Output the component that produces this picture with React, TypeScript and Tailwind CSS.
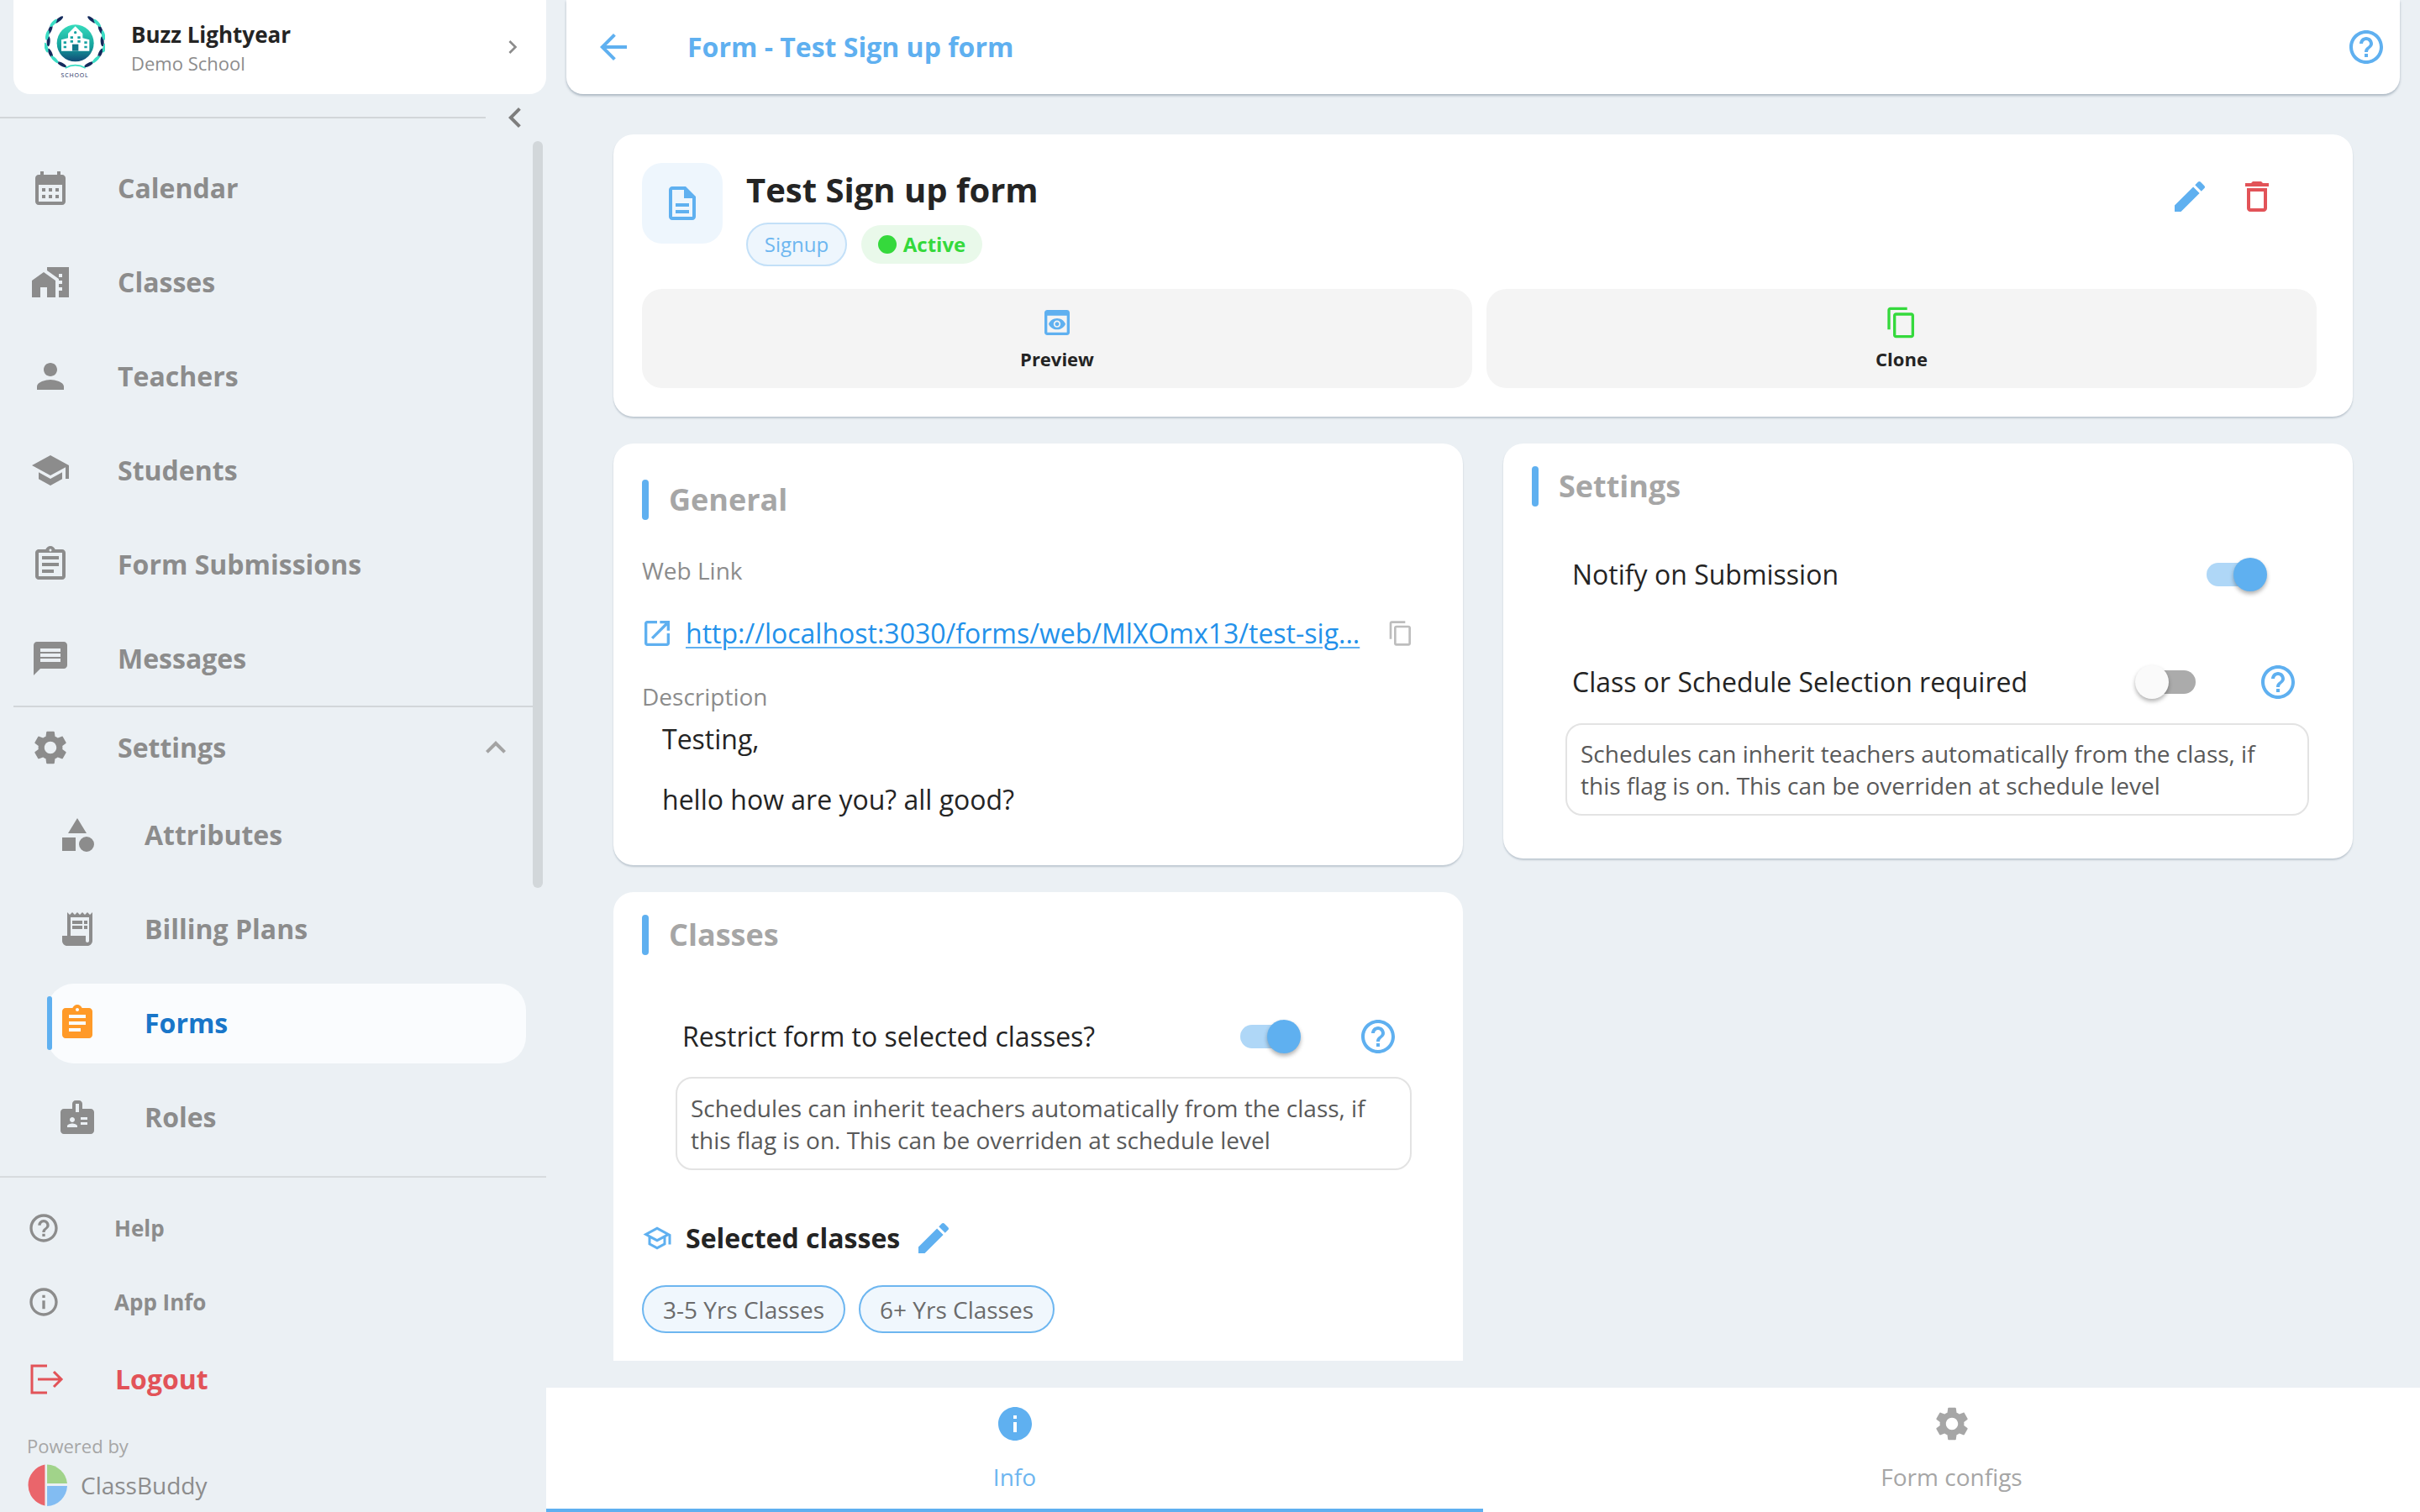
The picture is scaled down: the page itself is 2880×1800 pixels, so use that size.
import React from "react";

const P = {
  calendar: "M19 4h-1V2h-2v2H8V2H6v2H5c-1.1 0-2 .9-2 2v14c0 1.1.9 2 2 2h14c1.1 0 2-.9 2-2V6c0-1.1-.9-2-2-2zm0 16H5V10h14v10zM9 14H7v-2h2v2zm4 0h-2v-2h2v2zm4 0h-2v-2h2v2zm-8 4H7v-2h2v2zm4 0h-2v-2h2v2zm4 0h-2v-2h2v2z",
  classes: "M1 11v10h5v-6h4v6h5V11L8 6zM10 3v1.97l7 5V11h2v2h-2v2h2v2h-2v4h6V3H10zm9 6h-2V7h2v2z",
  person: "M12 12c2.21 0 4-1.79 4-4s-1.79-4-4-4-4 1.79-4 4 1.79 4 4 4zm0 2c-2.67 0-8 1.34-8 4v2h16v-2c0-2.66-5.33-4-8-4z",
  school: "M5 13.18v4L12 21l7-3.82v-4L12 17l-7-3.82zM12 3L1 9l11 6 9-4.91V17h2V9L12 3z",
  submissions: "M7 15h7v2H7zm0-4h10v2H7zm0-4h10v2H7zm12-4h-4.18C14.4 1.84 13.3 1 12 1c-1.3 0-2.4.84-2.82 2H5c-.14 0-.27.01-.4.04-.39.08-.74.28-1.01.55-.18.18-.33.4-.43.64-.1.23-.16.49-.16.77v14c0 .27.06.54.16.78s.25.45.43.64c.27.27.62.47 1.01.55.13.02.26.03.4.03h14c1.1 0 2-.9 2-2V5c0-1.1-.9-2-2-2zm-7-.25c.41 0 .75.34.75.75s-.34.75-.75.75-.75-.34-.75-.75.34-.75.75-.75zM19 19H5V5h14v14z",
  message: "M20 2H4c-1.1 0-1.99.9-1.99 2L2 22l4-4h14c1.1 0 2-.9 2-2V4c0-1.1-.9-2-2-2zm-2 12H6v-2h12v2zm0-3H6V9h12v2zm0-3H6V6h12v2z",
  settings: "M19.14,12.94c0.04-0.3,0.06-0.61,0.06-0.94c0-0.32-0.02-0.64-0.07-0.94l2.03-1.58c0.18-0.14,0.23-0.41,0.12-0.61 l-1.92-3.32c-0.12-0.22-0.37-0.29-0.59-0.22l-2.39,0.96c-0.5-0.38-1.03-0.7-1.62-0.94L14.4,2.81c-0.04-0.24-0.24-0.41-0.48-0.41 h-3.84c-0.24,0-0.43,0.17-0.47,0.41L9.25,5.35C8.66,5.59,8.12,5.92,7.63,6.29L5.24,5.33c-0.22-0.08-0.47,0-0.59,0.22L2.74,8.87 C2.62,9.08,2.66,9.34,2.86,9.48l2.03,1.58C4.84,11.36,4.8,11.69,4.8,12s0.02,0.64,0.07,0.94l-2.03,1.58 c-0.18,0.14-0.23,0.41-0.12,0.61l1.92,3.32c0.12,0.22,0.37,0.29,0.59,0.22l2.39-0.96c0.5,0.38,1.03,0.7,1.62,0.94l0.36,2.54 c0.05,0.24,0.24,0.41,0.48,0.41h3.84c0.24,0,0.44-0.17,0.47-0.41l0.36-2.54c0.59-0.24,1.13-0.56,1.62-0.94l2.39,0.96 c0.22,0.08,0.47,0,0.59-0.22l1.92-3.32c0.12-0.22,0.07-0.47-0.12-0.61L19.14,12.94z M12,15.6c-1.98,0-3.6-1.62-3.6-3.6 s1.62-3.6,3.6-3.6s3.6,1.62,3.6,3.6S13.98,15.6,12,15.6z",
  category: "M12 2l-5.5 9h11zM17.5 13a4.5 4.5 0 1 0 0 9 4.5 4.5 0 1 0 0-9zM3 13.5h8v8H3z",
  billing: "M19.5 3.5 18 2l-1.5 1.5L15 2l-1.5 1.5L12 2l-1.5 1.5L9 2 7.5 3.5 6 2v14H3v3c0 1.66 1.34 3 3 3h12c1.66 0 3-1.34 3-3V2l-1.5 1.5zM19 19c0 .55-.45 1-1 1s-1-.45-1-1v-3H8V5h11v14zM9 7h6v2H9zm7 0h2v2h-2zm-7 3h6v2H9zm7 0h2v2h-2z",
  assignment: "M19 3h-4.18C14.4 1.84 13.3 1 12 1c-1.3 0-2.4.84-2.82 2H5c-1.1 0-2 .9-2 2v14c0 1.1.9 2 2 2h14c1.1 0 2-.9 2-2V5c0-1.1-.9-2-2-2zm-7 0c.55 0 1 .45 1 1s-.45 1-1 1-1-.45-1-1 .45-1 1-1zm2 14H7v-2h7v2zm3-4H7v-2h10v2zm0-4H7V7h10v2z",
  badge: "M20 7h-5V4c0-1.1-.9-2-2-2h-2c-1.1 0-2 .9-2 2v3H4c-1.1 0-2 .9-2 2v11c0 1.1.9 2 2 2h16c1.1 0 2-.9 2-2V9c0-1.1-.9-2-2-2zM9 12c.83 0 1.5.67 1.5 1.5S9.83 15 9 15s-1.5-.67-1.5-1.5S8.17 12 9 12zm3 6H6v-.75c0-1 2-1.5 3-1.5s3 .5 3 1.5V18zm1-9h-2V4h2v5zm5 7.5h-4V15h4v1.5zm0-3h-4V12h4v1.5z",
  help: "M11 18h2v-2h-2v2zm1-16C6.48 2 2 6.48 2 12s4.48 10 10 10 10-4.48 10-10S17.52 2 12 2zm0 18c-4.41 0-8-3.59-8-8s3.59-8 8-8 8 3.59 8 8-3.59 8-8 8zm0-14c-2.21 0-4 1.79-4 4h2c0-1.1.9-2 2-2s2 .9 2 2c0 2-3 1.75-3 5h2c0-2.25 3-2.5 3-5 0-2.21-1.79-4-4-4z",
  infoOutline: "M11 7h2v2h-2zm0 4h2v6h-2zm1-9C6.48 2 2 6.48 2 12s4.48 10 10 10 10-4.48 10-10S17.52 2 12 2zm0 18c-4.41 0-8-3.59-8-8s3.59-8 8-8 8 3.59 8 8-3.59 8-8 8z",
  info: "M12 2C6.48 2 2 6.48 2 12s4.48 10 10 10 10-4.48 10-10S17.52 2 12 2zm1 15h-2v-6h2v6zm0-8h-2V7h2v2z",
  description: "M8 16h8v2H8zm0-4h8v2H8zm6-10H6c-1.1 0-2 .9-2 2v16c0 1.1.89 2 1.99 2H18c1.1 0 2-.9 2-2V8l-6-6zm4 18H6V4h7v5h5v11z",
  preview: "M19 3H5c-1.11 0-2 .9-2 2v14c0 1.1.89 2 2 2h14c1.1 0 2-.9 2-2V5c0-1.1-.89-2-2-2zm0 16H5V7h14v12zm-5.5-6c0 .83-.67 1.5-1.5 1.5s-1.5-.67-1.5-1.5.67-1.5 1.5-1.5 1.5.67 1.5 1.5zM12 9c-2.73 0-5.06 1.66-6 4 .94 2.34 3.27 4 6 4s5.06-1.66 6-4c-.94-2.34-3.27-4-6-4zm0 6.5c-1.38 0-2.5-1.12-2.5-2.5s1.12-2.5 2.5-2.5 2.5 1.12 2.5 2.5-1.12 2.5-2.5 2.5z",
  copy: "M16 1H4c-1.1 0-2 .9-2 2v14h2V3h12V1zm3 4H8c-1.1 0-2 .9-2 2v14c0 1.1.9 2 2 2h11c1.1 0 2-.9 2-2V7c0-1.1-.9-2-2-2zm0 16H8V7h11v14z",
  edit: "M3 17.25V21h3.75L17.81 9.94l-3.75-3.75L3 17.25zM20.71 7.04c.39-.39.39-1.02 0-1.41l-2.34-2.34c-.39-.39-1.02-.39-1.41 0l-1.83 1.83 3.75 3.75 1.83-1.83z",
  trash: "M6 19c0 1.1.9 2 2 2h8c1.1 0 2-.9 2-2V7H6v12zM8 9h8v10H8V9zm7.5-5l-1-1h-5l-1 1H5v2h14V4z",
  open: "M19 19H5V5h7V3H5c-1.11 0-2 .9-2 2v14c0 1.1.89 2 2 2h14c1.1 0 2-.9 2-2v-7h-2v7zM14 3v2h3.59l-9.83 9.83 1.41 1.41L19 6.41V10h2V3h-7z",
  schoolOutline: "M12 3L1 9l4 2.18v6L12 21l7-3.82v-6l2-1.09V17h2V9L12 3zm6.82 6L12 12.72 5.18 9 12 5.28 18.82 9zM17 15.99l-5 2.73-5-2.73v-3.72L12 15l5-2.73v3.72z",
  back: "M20 11H7.83l5.59-5.59L12 4l-8 8 8 8 1.41-1.41L7.83 13H20v-2z",
  right: "M10 6L8.59 7.41 13.17 12l-4.58 4.59L10 18l6-6z",
  left: "M15.41 7.41 14 6l-6 6 6 6 1.41-1.41L10.83 12z",
  up: "M12 8l-6 6 1.41 1.41L12 10.83l4.59 4.58L18 14z",
};

const I = ({ d, className }: { d: string; className: string }) => (
  <svg viewBox="0 0 24 24" fill="currentColor" className={`shrink-0 ${className}`}>
    <path d={d} />
  </svg>
);

const LEAVES: [number, number, number, string][] = [
  [88, 40, 50, "#142a5c"],
  [56, 76, 22, "#142a5c"],
  [50, 118, 4, "#142a5c"],
  [57, 160, -24, "#142a5c"],
  [98, 200, -62, "#142a5c"],
  [68, 52, 42, "#3adcc4"],
  [46, 96, 12, "#3adcc4"],
  [42, 140, -16, "#3adcc4"],
  [72, 182, -46, "#3adcc4"],
];

const SchoolLogo = () => (
  <div className="flex flex-col items-center w-[76px]">
    <svg viewBox="36 24 216 198" className="w-[72px] h-[66px] mt-[18px]">
      <defs>
        <linearGradient id="sg" x1="0" y1="0" x2="0" y2="1">
          <stop offset="0" stopColor="#36dcbc" />
          <stop offset="0.6" stopColor="#14a09c" />
          <stop offset="1" stopColor="#124a76" />
        </linearGradient>
      </defs>
      {LEAVES.map(([x, y, r, c], i) => (
        <g key={i} fill={c}>
          <ellipse cx={x} cy={y} rx="6" ry="18" transform={`rotate(${r} ${x} ${y})`} />
          <ellipse cx={292 - x} cy={y} rx="6" ry="18" transform={`rotate(${-r} ${292 - x} ${y})`} />
        </g>
      ))}
      <circle cx="146" cy="124" r="66" fill="url(#sg)" />
      <path d="M96 112l24-6v-16l26-26 26 26v16l24 6v40h-100z" fill="#fff" />
      <path d="M135 128h22v24h-22z" fill="#12788a" />
      <path d="M104 118h10v8h-10zM104 134h10v8h-10zM178 118h10v8h-10zM178 134h10v8h-10zM128 100h10v8h-10zM154 100h10v8h-10zM128 114h10v8h-10zM154 114h10v8h-10z" fill="#17a3a3" />
      <circle cx="146" cy="86" r="5" fill="#17a3a3" />
      <path d="M110 213q36-20 72 0" fill="none" stroke="#3adcc4" strokeWidth="5" />
    </svg>
    <span className="text-[7px] leading-[9px] tracking-[0.8px] text-[#142a5c] mt-[1px]">SCHOOL</span>
  </div>
);

const NavItem = ({ d, label, sub }: { d: string; label: string; sub?: boolean }) => (
  <div className={`h-[112px] flex items-center shrink-0 ${sub ? "pl-[68px]" : "pl-[36px]"}`}>
    <I d={d} className="w-12 h-12 text-[#8c8c8c]" />
    <span className="ml-[56px] text-[32px] leading-[48px] font-bold text-[#8c8c8c]">{label}</span>
  </div>
);

const Toggle = ({ on }: { on: boolean }) => (
  <div className={`relative w-[68px] h-[28px] rounded-full shrink-0 ${on ? "bg-[#afd7f7]" : "bg-[#ababab]"}`}>
    <div
      className={`absolute top-[-6px] w-10 h-10 rounded-full shadow-[0_3px_5px_rgba(0,0,0,0.3)] ${on ? "right-[-4px] bg-[#5fb0f0]" : "left-[-4px] bg-[#fafafa]"}`}
    />
  </div>
);

const SectionTitle = ({ label }: { label: string }) => (
  <div className="flex items-center h-12">
    <div className="w-2 h-12 rounded-full bg-[#5fb0f0]" />
    <span className="ml-[24px] text-[36px] leading-[48px] font-bold text-[#a6a6a6]">{label}</span>
  </div>
);

const Note = ({ className }: { className: string }) => (
  <div className={`border-2 border-[#e3e3e3] rounded-[20px] pl-[16px] pr-[16px] text-[28px] leading-[38px] text-[#595959] ${className}`}>
    Schedules can inherit teachers automatically from the class, if this flag is on. This can be overriden at schedule level
  </div>
);

const Chip = ({ label, className }: { label: string; className: string }) => (
  <div className={`h-[57px] flex items-center justify-center rounded-full border-2 border-[#6db6f0] bg-[#f0f7fd] text-[28px] text-[#6b6b6b] ${className}`}>
    {label}
  </div>
);

export default function App() {
  return (
    <div className="flex w-[2880px] h-[1800px] overflow-hidden bg-[#ebf0f4]" style={{ fontFamily: '"Open Sans", sans-serif' }}>
      {/* Sidebar */}
      <aside className="relative w-[650px] h-[1800px] shrink-0 flex flex-col">
        <div className="ml-4 w-[634px] h-[112px] shrink-0 bg-white rounded-b-[20px] flex items-start pl-[35px] pr-[24px]">
          <SchoolLogo />
          <div className="ml-[29px] mt-[22px] flex flex-col">
            <span className="text-[26px] leading-[38px] font-bold text-[#242424]">Buzz Lightyear</span>
            <span className="text-[22px] leading-[31px] text-[#8c8c8c]">Demo School</span>
          </div>
          <I d={P.right} className="ml-auto mt-[40px] w-8 h-8 text-[#8c8c8c]" />
        </div>
        <div className="h-[56px] shrink-0 flex items-center">
          <div className="w-[578px] h-[2px] bg-[#d2d6d9]" />
          <I d={P.left} className="ml-[11px] w-12 h-12 text-[#7d7d7d]" />
        </div>
        <NavItem d={P.calendar} label="Calendar" />
        <NavItem d={P.classes} label="Classes" />
        <NavItem d={P.person} label="Teachers" />
        <NavItem d={P.school} label="Students" />
        <NavItem d={P.submissions} label="Form Submissions" />
        <NavItem d={P.message} label="Messages" />
        <div className="ml-4 w-[618px] h-[2px] bg-[#d2d6d9] shrink-0" />
        <div className="h-[96px] flex items-center pl-[36px] pr-[36px] shrink-0">
          <I d={P.settings} className="w-12 h-12 text-[#8c8c8c]" />
          <span className="ml-[56px] text-[32px] leading-[48px] font-bold text-[#8c8c8c]">Settings</span>
          <I d={P.up} className="ml-auto w-12 h-12 text-[#a3a3a3]" />
        </div>
        <NavItem d={P.category} label="Attributes" sub />
        <NavItem d={P.billing} label="Billing Plans" sub />
        <div className="h-[112px] flex items-center shrink-0">
          <div className="ml-[56px] w-[570px] h-[95px] rounded-[32px] bg-[#fafcfe] flex items-center relative pl-[12px]">
            <div className="absolute left-0 top-[15px] w-[6px] h-16 rounded-full bg-[#5fb0f0]" />
            <I d={P.assignment} className="w-12 h-12 text-[#ff9a28]" />
            <span className="ml-[56px] text-[32px] leading-[48px] font-bold text-[#1976c9]">Forms</span>
          </div>
        </div>
        <NavItem d={P.badge} label="Roles" sub />
        <div className="mt-[14px] w-[650px] h-[2px] bg-[#d7dbde] shrink-0" />
        <div className="h-[88px] mt-[16px] flex items-center pl-[32px] shrink-0">
          <I d={P.help} className="w-10 h-10 text-[#8c8c8c]" />
          <span className="ml-[64px] text-[26px] font-bold text-[#8c8c8c]">Help</span>
        </div>
        <div className="h-[88px] flex items-center pl-[32px] shrink-0">
          <I d={P.infoOutline} className="w-10 h-10 text-[#8c8c8c]" />
          <span className="ml-[64px] text-[26px] font-bold text-[#8c8c8c]">App Info</span>
        </div>
        <div className="h-[96px] flex items-center pl-[36px] shrink-0">
          <svg viewBox="0 0 40 36" fill="none" stroke="#e25358" strokeWidth="3" className="w-10 h-9 shrink-0">
            <path d="M20 2H2v32h18M9 18h28M28 9l9 9-9 9" />
          </svg>
          <span className="ml-[61px] text-[32px] font-bold text-[#e25358]">Logout</span>
        </div>
        <span className="ml-[32px] mt-[16px] text-[22px] leading-[30px] text-[#a6a6a6] shrink-0">Powered by</span>
        <div className="ml-[30px] mt-[7px] flex items-center shrink-0">
          <svg viewBox="0 0 48 48" className="w-[50px] h-[50px]">
            <path d="M22.5 0.500a24 24 0 0 0 0 47z" fill="#ea656b" />
            <path d="M25 0.500a24 24 0 0 1 23 21.500H25z" fill="#a1d38a" />
            <path d="M25 25h23a24 24 0 0 1-23 23z" fill="#82bcf2" />
          </svg>
          <span className="ml-[16px] text-[28px] text-[#8c8c8c]">ClassBuddy</span>
        </div>
        <div className="absolute left-[634px] top-[168px] w-3 h-[889px] rounded-full bg-[#d2d7da]" />
      </aside>

      {/* Main */}
      <main className="flex-1 h-[1800px] flex flex-col min-w-0">
        <header className="ml-6 mr-6 h-[112px] shrink-0 bg-white rounded-b-[20px] shadow-[0_2px_3px_rgba(90,110,130,0.45)] flex items-center pl-[32px] pr-[16px]">
          <I d={P.back} className="w-12 h-12 text-[#5fb0f0]" />
          <span className="ml-[64px] text-[32px] font-bold text-[#5fb0f0]">Form - Test Sign up form</span>
          <I d={P.help} className="ml-auto w-12 h-12 text-[#5fb0f0]" />
        </header>

        <div className="h-[1508px] shrink-0 overflow-hidden pl-[80px] pr-[80px] pt-[48px]">
          {/* Top card */}
          <section className="w-[2070px] h-[336px] bg-white rounded-[24px] shadow-[0_2px_2px_rgba(90,110,130,0.3)] pt-[34px] px-[34px]">
            <div className="flex h-[116px]">
              <div className="w-24 h-24 rounded-[24px] bg-[#eef6fd] flex items-center justify-center">
                <I d={P.description} className="w-12 h-12 text-[#5fb0f0]" />
              </div>
              <div className="ml-[28px] flex flex-col">
                <span className="text-[40px] leading-[54px] font-bold text-[#242424] mt-[5px]">Test Sign up form</span>
                <div className="flex items-center mt-[12px]">
                  <div className="h-[52px] w-[120px] rounded-full border-2 border-[#c3e0f8] bg-[#eef6fd] flex items-center justify-center text-[24px] text-[#6db6f0]">Signup</div>
                  <div className="ml-[17px] h-[46px] w-[144px] rounded-full bg-[#e9f9ea] flex items-center justify-center gap-[8px] text-[24px] font-bold text-[#35d93c]">
                    <span className="w-[22px] h-[22px] rounded-full bg-[#35d93c]" />
                    Active
                  </div>
                </div>
              </div>
              <I d={P.edit} className="ml-auto mr-[32px] mt-[16px] w-12 h-12 text-[#5fb0f0]" />
              <I d={P.trash} className="mr-[56px] mt-[16px] w-12 h-12 text-[#e25358]" />
            </div>
            <div className="flex gap-[17px] mt-[34px]">
              <div className="w-[988px] h-[118px] rounded-[24px] bg-[#f4f4f4] flex flex-col items-center pt-[20px]">
                <I d={P.preview} className="w-10 h-10 text-[#5fb0f0]" />
                <span className="mt-[8px] text-[22px] leading-[30px] font-bold text-[#242424]">Preview</span>
              </div>
              <div className="w-[988px] h-[118px] rounded-[24px] bg-[#f4f4f4] flex flex-col items-center pt-[20px]">
                <I d={P.copy} className="w-10 h-10 text-[#35d93c]" />
                <span className="mt-[8px] text-[22px] leading-[30px] font-bold text-[#242424]">Clone</span>
              </div>
            </div>
          </section>

          <div className="flex gap-[48px] mt-[32px] items-start">
            {/* Left column */}
            <div className="w-[1011px] flex flex-col gap-[32px]">
              <section className="h-[502px] bg-white rounded-[24px] shadow-[0_2px_2px_rgba(90,110,130,0.3)] px-[34px] pt-[43px]">
                <SectionTitle label="General" />
                <div className="mt-[40px] h-10 flex items-center text-[28px] text-[#8c8c8c]">Web Link</div>
                <div className="mt-[31px] h-12 flex items-center">
                  <I d={P.open} className="-ml-[2px] w-10 h-10 text-[#5fb0f0]" />
                  <span className="ml-[14px] w-[803px] shrink-0 whitespace-nowrap text-[32px] text-[#2391ea] underline decoration-[#5fb0f0] decoration-2 underline-offset-4">http://localhost:3030/forms/web/MlXOmx13/test-sig...</span>
                  <I d={P.copy} className="ml-[32px] w-8 h-8 text-[#bdbdbd]" />
                </div>
                <div className="mt-[31px] h-10 flex items-center text-[28px] text-[#8c8c8c]">Description</div>
                <div className="mt-[11px] ml-[24px] h-10 flex items-center text-[32px] text-[#242424]">Testing,</div>
                <div className="mt-[32px] ml-[24px] h-10 flex items-center text-[32px] text-[#242424]">hello how are you? all good?</div>
              </section>
              <section className="h-[620px] bg-white rounded-t-[24px] px-[34px] pt-[27px]">
                <SectionTitle label="Classes" />
                <div className="mt-[73px] h-12 flex items-center pl-[48px]">
                  <span className="text-[32px] text-[#242424]">Restrict form to selected classes?</span>
                  <div className="ml-auto mr-[46px]"><Toggle on /></div>
                  <I d={P.help} className="mr-[43px] ml-[26px] w-12 h-12 text-[#5fb0f0]" />
                </div>
                <Note className="mt-[24px] ml-[40px] w-[876px] h-[111px] pt-[16px]" />
                <div className="mt-[57px] h-12 flex items-center">
                  <I d={P.schoolOutline} className="w-9 h-9 text-[#5fb0f0]" />
                  <span className="ml-[16px] text-[32px] font-bold text-[#242424]">Selected classes</span>
                  <I d={P.edit} className="ml-[16px] w-12 h-12 text-[#5fb0f0]" />
                </div>
                <div className="mt-[32px] flex gap-[16px]">
                  <Chip label="3-5 Yrs Classes" className="w-[242px]" />
                  <Chip label="6+ Yrs Classes" className="w-[233px]" />
                </div>
              </section>
            </div>
            {/* Right column */}
            <section className="w-[1011px] h-[494px] bg-white rounded-[24px] shadow-[0_2px_2px_rgba(90,110,130,0.3)] px-[34px] pt-[27px]">
              <SectionTitle label="Settings" />
              <div className="mt-[57px] h-12 flex items-center pl-[48px] pr-[72px]">
                <span className="text-[32px] text-[#242424]">Notify on Submission</span>
                <div className="ml-auto"><Toggle on /></div>
              </div>
              <div className="mt-[80px] h-12 flex items-center pl-[48px]">
                <span className="text-[32px] text-[#242424]">Class or Schedule Selection required</span>
                <div className="ml-auto"><Toggle on={false} /></div>
                <I d={P.help} className="ml-[74px] mr-[31px] w-12 h-12 text-[#5fb0f0]" />
              </div>
              <Note className="mt-[25px] ml-[40px] w-[885px] h-[110px] pt-[15px]" />
            </section>
          </div>
        </div>

        <div className="mt-[32px] h-[148px] shrink-0 flex bg-white">
          <div className="w-[1115px] h-[148px] border-b-[4px] border-[#5fb0f0] flex flex-col items-center pt-[19px]">
            <I d={P.info} className="w-12 h-12 text-[#5fb0f0]" />
            <span className="mt-[20px] text-[28px] leading-[38px] text-[#6db6f0]">Info</span>
          </div>
          <div className="flex-1 flex flex-col items-center pt-[19px]">
            <I d={P.settings} className="w-12 h-12 text-[#a6a6a6]" />
            <span className="mt-[20px] text-[28px] leading-[38px] text-[#a6a6a6]">Form configs</span>
          </div>
        </div>
      </main>
    </div>
  );
}
